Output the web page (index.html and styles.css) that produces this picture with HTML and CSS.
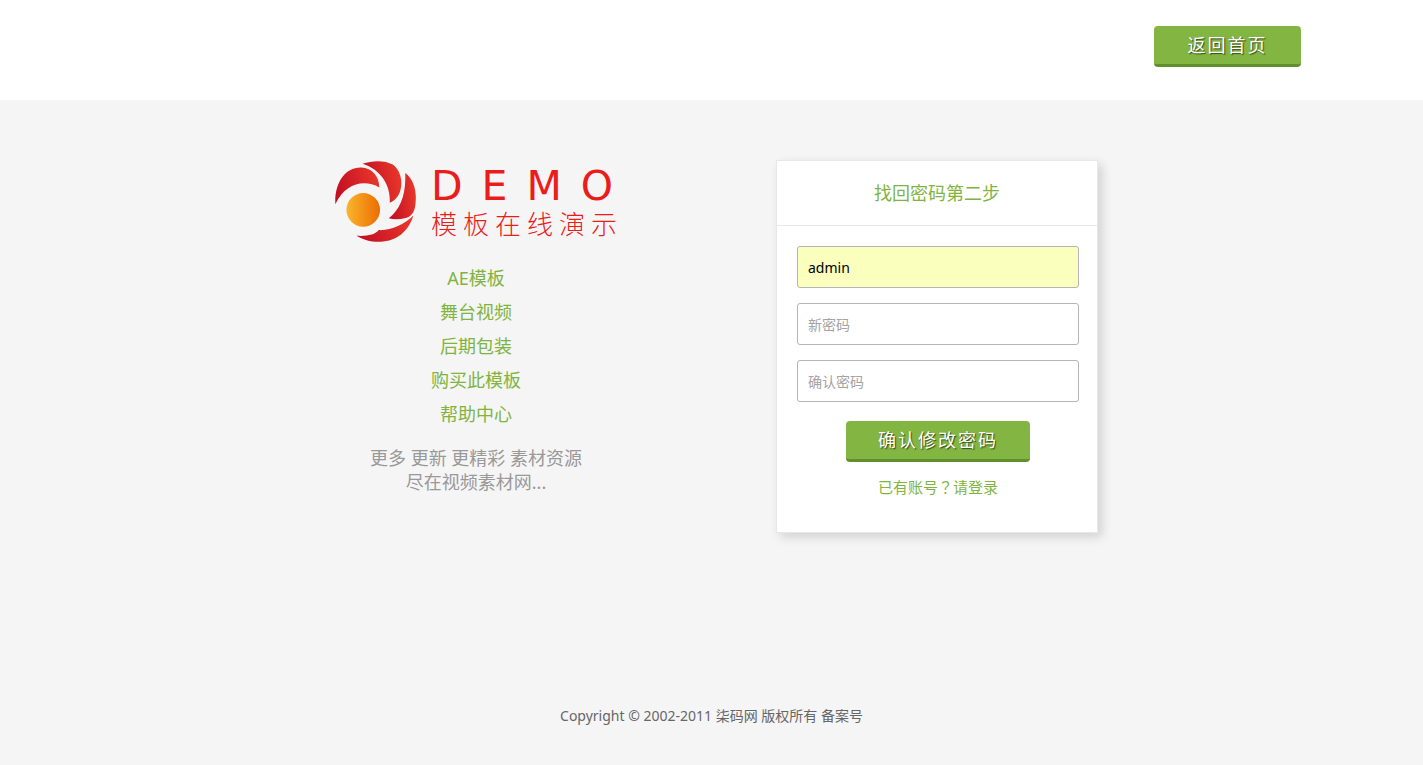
FILE: index.html
```html
<!DOCTYPE html>
<html lang="zh-CN">
<head>
<meta charset="utf-8">
<meta name="viewport" content="width=device-width, initial-scale=1">
<title>找回密码第二步</title>
<link rel="stylesheet" href="styles.css">
</head>
<body>
<header class="site-header">
  <div class="header-inner">
    <button class="btn btn-home" type="button">返回首页</button>
  </div>
</header>
<main class="content">
  <section class="intro">
    <div class="logo">
      <svg class="logo-mark" viewBox="30 30 241 243" aria-hidden="true">
        <defs>
          <linearGradient id="red" x1="0" x2="1" y1=".6" y2=".4"><stop offset="0" stop-color="#c30d23"/><stop offset="1" stop-color="#e8382b"/></linearGradient>
          <linearGradient id="orange" x1="0" x2="1"><stop offset="0" stop-color="#f8b62d"/><stop offset="1" stop-color="#ed6c00"/></linearGradient>
        </defs>
        <g fill="url(#red)">
          <path d="M31 161C28 101 58 51 108 52C141 53 161 78 162 111C117 87 62 97 31 161Z"/>
          <path d="M112 41C142 30 178 30 202 43C224 59 232 91 225 118C220 136 211 148 193 157C196 108 169 59 112 41Z"/>
          <path d="M239 68C262 85 273 116 270 152C269 180 261 196 240 202C222 207 205 207 190 203C221 179 242 138 239 68Z"/>
          <path d="M263 195C250 240 215 272 165 273C138 274 113 267 94 255C125 257 150 252 160 238C196 240 235 223 263 195Z"/>
        </g>
        <circle cx="114" cy="178" r="50" fill="url(#orange)"/>
      </svg>
      <div class="logo-text">
        <span class="logo-name">DEMO</span>
        <span class="logo-tagline">模板在线演示</span>
      </div>
    </div>
    <nav class="links">
      <a href="#">AE模板</a>
      <a href="#">舞台视频</a>
      <a href="#">后期包装</a>
      <a href="#">购买此模板</a>
      <a href="#">帮助中心</a>
    </nav>
    <p class="slogan">更多 更新 更精彩 素材资源<br>尽在视频素材网...</p>
  </section>
  <section class="card">
    <h1 class="card-title">找回密码第二步</h1>
    <form class="form">
      <input class="field field-filled" type="text" value="admin" aria-label="用户名">
      <input class="field" type="password" placeholder="新密码" aria-label="新密码">
      <input class="field" type="password" placeholder="确认密码" aria-label="确认密码">
      <button class="btn btn-submit" type="button">确认修改密码</button>
      <a class="login-link" href="#">已有账号<span class="mark" lang="zh-TW">？</span>请登录</a>
    </form>
  </section>
</main>
<footer class="site-footer">Copyright © 2002-2011 柒码网 版权所有 备案号</footer>
</body>
</html>
```
FILE: styles.css
```css
* {
  box-sizing: border-box;
}

body {
  margin: 0;
  min-height: 100vh;
  display: flex;
  flex-direction: column;
  background: #f5f5f5;
  color: #666;
  font: 14px/20px "Noto Sans", "Noto Sans CJK SC", sans-serif;
}

a {
  color: #7fb441;
  text-decoration: none;
}

.site-header {
  background: #fff;
  padding: 26px 20px 33px;
}

.header-inner {
  max-width: 1178px;
  margin: 0 auto;
  display: flex;
  justify-content: flex-end;
}

.btn {
  height: 41px;
  border: 0;
  border-bottom: 3px solid #628f2d;
  border-radius: 4px;
  background: #82b541;
  color: #fff;
  font: 400 18px/34px "Noto Sans CJK SC", sans-serif;
  letter-spacing: 2px;
  text-shadow: 1px 1px 1px rgba(0, 0, 0, 0.6);
  cursor: pointer;
}

.btn-home {
  padding: 0 33px 2px 34px;
}

.btn-submit {
  align-self: center;
  margin-top: 4px;
  padding: 0 32px 2px;
}

.content {
  width: 100%;
  max-width: 932px;
  margin: 0 auto;
  padding: 60px 10px 0 0;
  display: grid;
  grid-template-columns: 1fr 1fr;
  justify-items: center;
  align-items: start;
}

.intro {
  display: flex;
  flex-direction: column;
  align-items: center;
  text-align: center;
}

.logo {
  display: flex;
  gap: 15px;
  color: #eb1c1c;
  margin-bottom: 19px;
}

.logo-mark {
  width: 81px;
  height: 82px;
}

.logo-text {
  display: flex;
  flex-direction: column;
  padding-top: 3px;
  text-align: left;
}

.logo-name {
  font: 400 41px/46px "DejaVu Sans", sans-serif;
  letter-spacing: 19px;
  margin-right: -19px;
}

.logo-tagline {
  font: 300 26px/28px "Noto Sans CJK SC", sans-serif;
  letter-spacing: 6px;
  margin-right: -6px;
}

.links {
  display: flex;
  flex-direction: column;
  font-size: 18px;
  line-height: 34px;
}

.slogan {
  margin: 15px 0 0;
  color: #999;
  font-size: 18px;
  line-height: 24px;
}

.card {
  width: 100%;
  max-width: 322px;
  border: 1px solid #e8e8e8;
  background: #fff;
  box-shadow: 4px 4px 10px rgba(0, 0, 0, 0.15);
}

.card-title {
  margin: 0;
  border-bottom: 1px solid #e8e8e8;
  color: #7fb441;
  text-align: center;
  font-size: 18px;
  line-height: 64px;
  font-weight: 400;
}

.form {
  display: flex;
  flex-direction: column;
  gap: 15px;
  padding: 20px 18px 35px 20px;
}

.field {
  width: 100%;
  height: 42px;
  padding: 0 10px;
  border: 1px solid #b5b5b5;
  border-radius: 3px;
  background: #fff;
  color: #000;
  font: 14px/20px "Noto Sans", "Noto Sans CJK SC", sans-serif;
}

.field::placeholder {
  color: #a3a3a3;
}

.field-filled {
  background: #faffbd;
}

.login-link {
  align-self: center;
  font-size: 15px;
}

.mark {
  font-family: "Noto Sans CJK TC", sans-serif;
}

.site-footer {
  margin-top: auto;
  padding: 20px 0 39px;
  text-align: center;
}
```
